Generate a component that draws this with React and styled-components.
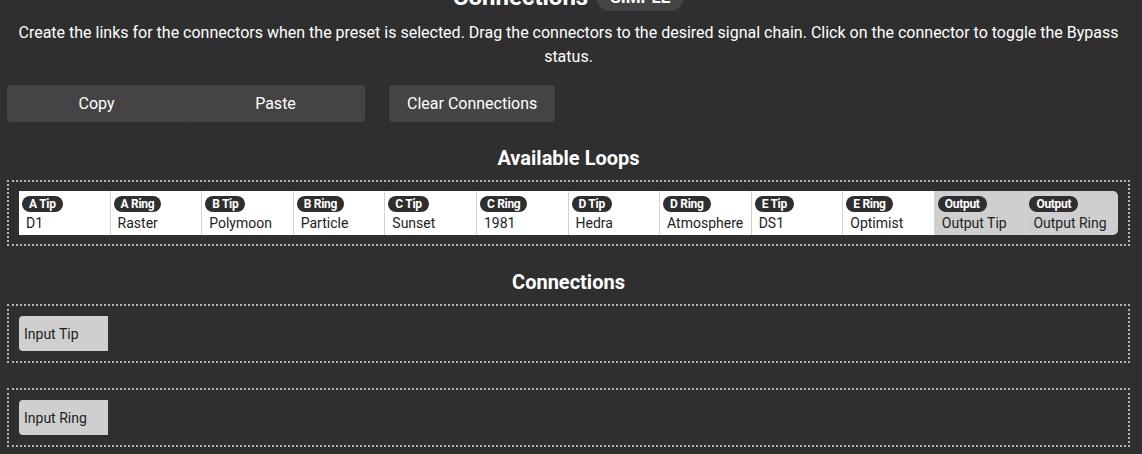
import React from 'react'
import styled, { createGlobalStyle } from 'styled-components'

const GlobalStyle = createGlobalStyle`
  html, body {
    margin: 0;
    padding: 0;
    background: #2f2f2f;
    font-family: Roboto, "Liberation Sans", sans-serif;
    color: #fff;
    overflow: hidden;
  }
`

const Page = styled.div`
  display: flex;
  flex-direction: column;
  padding: 0 12px 0 7px;
  margin-top: -18px;
`

const TitleRow = styled.div`
  display: flex;
  justify-content: center;
  align-items: center;
  gap: 8px;
  height: 30px;
`

const Title = styled.h1`
  margin: 0;
  font-size: 24px;
  font-weight: 700;
`

const ModePill = styled.span`
  background: #444;
  border-radius: 14px;
  padding: 0 14px;
  height: 28px;
  line-height: 28px;
  font-size: 17px;
  font-weight: 700;
`

const Description = styled.p`
  margin: 9px 0 0;
  text-align: center;
  font-size: 16px;
  line-height: 24px;
`

const ButtonRow = styled.div`
  display: flex;
  gap: 24px;
  margin-top: 16px;
`

const ButtonGroup = styled.div`
  display: flex;
  background: #444;
  border-radius: 4px;
  width: 358px;
`

const Button = styled.button`
  flex: ${(p) => (p.$grow ? 1 : 'none')};
  height: 37px;
  padding: 0 18px;
  background: #444;
  border: none;
  border-radius: 4px;
  color: #fff;
  font-family: inherit;
  font-size: 16px;
  font-weight: 400;
  cursor: pointer;
`

const SectionTitle = styled.h2`
  margin: ${(p) => p.$mt}px 0 10px;
  text-align: center;
  font-size: 20px;
  line-height: 24px;
  font-weight: 700;
`

const DottedBox = styled.div`
  border: 2px dotted #b5b5b5;
  padding: ${(p) => p.$pad || 9}px 10px;
  margin-bottom: ${(p) => p.$mb || 0}px;
`

const LoopStrip = styled.div`
  display: grid;
  grid-template-columns: repeat(12, 1fr);
  height: 44px;
  border-radius: 0 5px 5px 0;
  overflow: hidden;
`

const LoopCell = styled.div`
  display: flex;
  flex-direction: column;
  align-items: flex-start;
  padding: 5px 3px 0;
  background: ${(p) => (p.$output ? '#cfcfcf' : '#fff')};
  border-right: 1px solid #d2d2d2;
  color: #222;
  &:last-child {
    border-right: none;
  }
`

const Chip = styled.span`
  background: #2f2f2f;
  color: #fff;
  border-radius: 8px;
  height: 16px;
  line-height: 16px;
  padding: 0 7px;
  font-size: 12px;
  font-weight: 700;
  letter-spacing: -0.3px;
`

const LoopName = styled.span`
  margin-top: 2px;
  padding-left: 4px;
  font-size: 14px;
  line-height: 18px;
`

const ConnectionRow = styled.div`
  display: flex;
  gap: 6px;
`

const Connector = styled.div`
  display: flex;
  align-items: center;
  width: 84px;
  height: 35px;
  padding-left: 5px;
  background: #cfcfcf;
  border-radius: 4px 0 0 4px;
  color: #1e1e1e;
  font-size: 14px;
`

const loops = [
  ['A Tip', 'D1'],
  ['A Ring', 'Raster'],
  ['B Tip', 'Polymoon'],
  ['B Ring', 'Particle'],
  ['C Tip', 'Sunset'],
  ['C Ring', '1981'],
  ['D Tip', 'Hedra'],
  ['D Ring', 'Atmosphere'],
  ['E Tip', 'DS1'],
  ['E Ring', 'Optimist'],
  ['Output', 'Output Tip', true],
  ['Output', 'Output Ring', true],
]

const chains = ['Input Tip', 'Input Ring']

export default function App() {
  return (
    <>
      <GlobalStyle />
      <Page>
        <TitleRow>
          <Title>Connections</Title>
          <ModePill>SIMPLE</ModePill>
        </TitleRow>
        <Description>
          Create the links for the connectors when the preset is selected. Drag the connectors to the desired signal
          chain. Click on the connector to toggle the Bypass status.
        </Description>
        <ButtonRow>
          <ButtonGroup>
            <Button $grow>Copy</Button>
            <Button $grow>Paste</Button>
          </ButtonGroup>
          <Button>Clear Connections</Button>
        </ButtonRow>

        <SectionTitle $mt={24}>Available Loops</SectionTitle>
        <DottedBox>
          <LoopStrip>
            {loops.map(([chip, name, output]) => (
              <LoopCell key={name} $output={output}>
                <Chip>{chip}</Chip>
                <LoopName>{name}</LoopName>
              </LoopCell>
            ))}
          </LoopStrip>
        </DottedBox>

        <SectionTitle $mt={24}>Connections</SectionTitle>
        {chains.map((c, i) => (
          <DottedBox key={c} $pad={10} $mb={i === 0 ? 25 : 0}>
            <ConnectionRow>
              <Connector>{c}</Connector>
            </ConnectionRow>
          </DottedBox>
        ))}
      </Page>
    </>
  )
}
